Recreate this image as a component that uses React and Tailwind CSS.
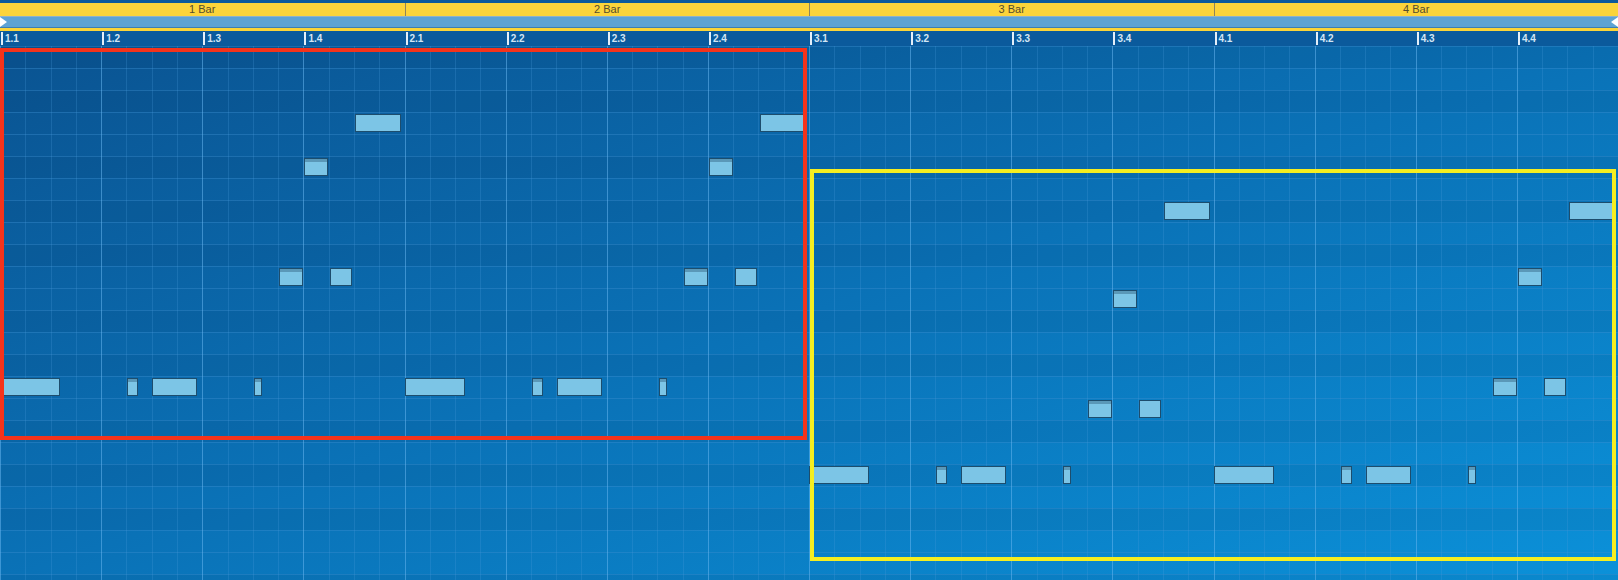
import React from 'react';

const BAR_W = 404.5;
const ROW_H = 22;
const ROW_COUNT = 25;
const BARS = [1, 2, 3, 4];
const BEATS = [1, 2, 3, 4];

// one bar of the riff: start (px into the bar), width, voice, velocity cap
const RIFF = [
  { x: 0, w: 60, voice: 'bass' },
  { x: 127, w: 11, voice: 'bass', cap: true },
  { x: 152, w: 45, voice: 'bass' },
  { x: 254, w: 8, voice: 'bass', cap: true },
  { x: 279, w: 24, voice: 'mid', cap: true },
  { x: 330, w: 22, voice: 'mid' },
  { x: 304, w: 24, voice: 'upper', cap: true },
  { x: 355, w: 46, voice: 'top' },
];

// row of each voice per bar (row 15 = C)
const VOICING = [
  { bass: 15, mid: 10, upper: 5, top: 3 },
  { bass: 15, mid: 10, upper: 5, top: 3 },
  { bass: 19, mid: 16, upper: 11, top: 7 },
  { bass: 19, mid: 15, upper: 10, top: 7 },
];

const BLACK_KEYS = [1, 3, 6, 8, 10];

function isBlackRow(row) {
  const semis = (((15 - row) % 12) + 12) % 12;
  return BLACK_KEYS.includes(semis);
}

const notes = VOICING.flatMap((voicing, bar) =>
  RIFF.map((n) => ({
    left: Math.round(bar * BAR_W + n.x),
    top: voicing[n.voice] * ROW_H + 2,
    width: n.w,
    cap: n.cap,
  }))
);

function Triangle({ dir }) {
  return (
    <svg width="7" height="10" viewBox="0 0 7 10" className="block">
      {dir === 'right' ? (
        <polygon points="0,0 7,5 0,10" fill="#ffffff" />
      ) : (
        <polygon points="7,0 0,5 7,10" fill="#ffffff" />
      )}
    </svg>
  );
}

function Note({ left, top, width, cap }) {
  return (
    <div
      className="absolute h-[18px] bg-[#7cc5e6] border border-[#1d4d6d] overflow-hidden"
      style={{ left, top, width }}
    >
      {cap && <div className="h-[3px] bg-[#5a98b8]" />}
    </div>
  );
}

export default function App() {
  return (
    <div className="w-[1618px] h-[580px] overflow-hidden flex flex-col bg-[#0b5a9b] font-['Liberation_Sans',Arial,sans-serif] select-none">
      <div className="h-[3px] bg-[#0b5a9b]" />

      {/* bar lengths */}
      <div className="h-[13px] grid grid-cols-4 bg-[#fbd43a]">
        {BARS.map((bar) => (
          <div
            key={bar}
            className={`flex items-center justify-center text-[11px] leading-none text-[#574d2c] ${bar > 1 ? 'border-l border-[#8f8558]' : ''}`}
          >
            {bar} Bar
          </div>
        ))}
      </div>

      <div className="h-px bg-[#8fb2c8]" />

      {/* cycle region */}
      <div className="h-[10px] bg-[#5ea3d4] relative">
        <div className="absolute left-0 top-0">
          <Triangle dir="right" />
        </div>
        <div className="absolute right-0 top-0">
          <Triangle dir="left" />
        </div>
      </div>

      <div className="h-px bg-[#3d7fb3]" />
      <div className="h-[3px] bg-[#fbd43a]" />

      {/* ruler */}
      <div className="h-[15px] grid grid-cols-16 bg-[#0b5a9c]">
        {BARS.flatMap((bar) =>
          BEATS.map((beat) => (
            <div key={`${bar}.${beat}`} className="flex items-start pl-[1px]">
              <div className="w-[2px] h-[13px] mt-px bg-[#e4eff9]" />
              <span className="ml-[2px] mt-[3px] text-[10px] leading-none font-bold text-[#d4e6f5]">
                {bar}.{beat}
              </span>
            </div>
          ))
        )}
      </div>

      {/* note grid */}
      <div className="relative flex-1 bg-linear-to-br from-[#0a5391] via-[#0a72b7] to-[#0b91d9]">
        <div className="absolute inset-0 flex flex-col">
          {Array.from({ length: ROW_COUNT }, (_, row) => (
            <div
              key={row}
              className={`h-[22px] shrink-0 border-t border-[#3d8fcf]/40 ${isBlackRow(row) ? 'bg-[#00254a]/8' : ''}`}
            />
          ))}
        </div>

        <div className="absolute inset-0 grid grid-cols-[repeat(64,minmax(0,1fr))]">
          {Array.from({ length: 64 }, (_, i) => (
            <div
              key={i}
              className={i % 4 === 0 ? 'border-l border-[#66b5ee]/55' : 'border-l border-[#4a9ddc]/25'}
            />
          ))}
        </div>

        {notes.map((n, i) => (
          <Note key={i} {...n} />
        ))}

        {/* selections */}
        <div className="absolute left-0 top-[2px] w-[807px] h-[392px] border-4 border-[#f5331b]" />
        <div className="absolute left-[810px] top-[123px] w-[806px] h-[392px] border-4 border-[#f6ee20]" />
      </div>
    </div>
  );
}
